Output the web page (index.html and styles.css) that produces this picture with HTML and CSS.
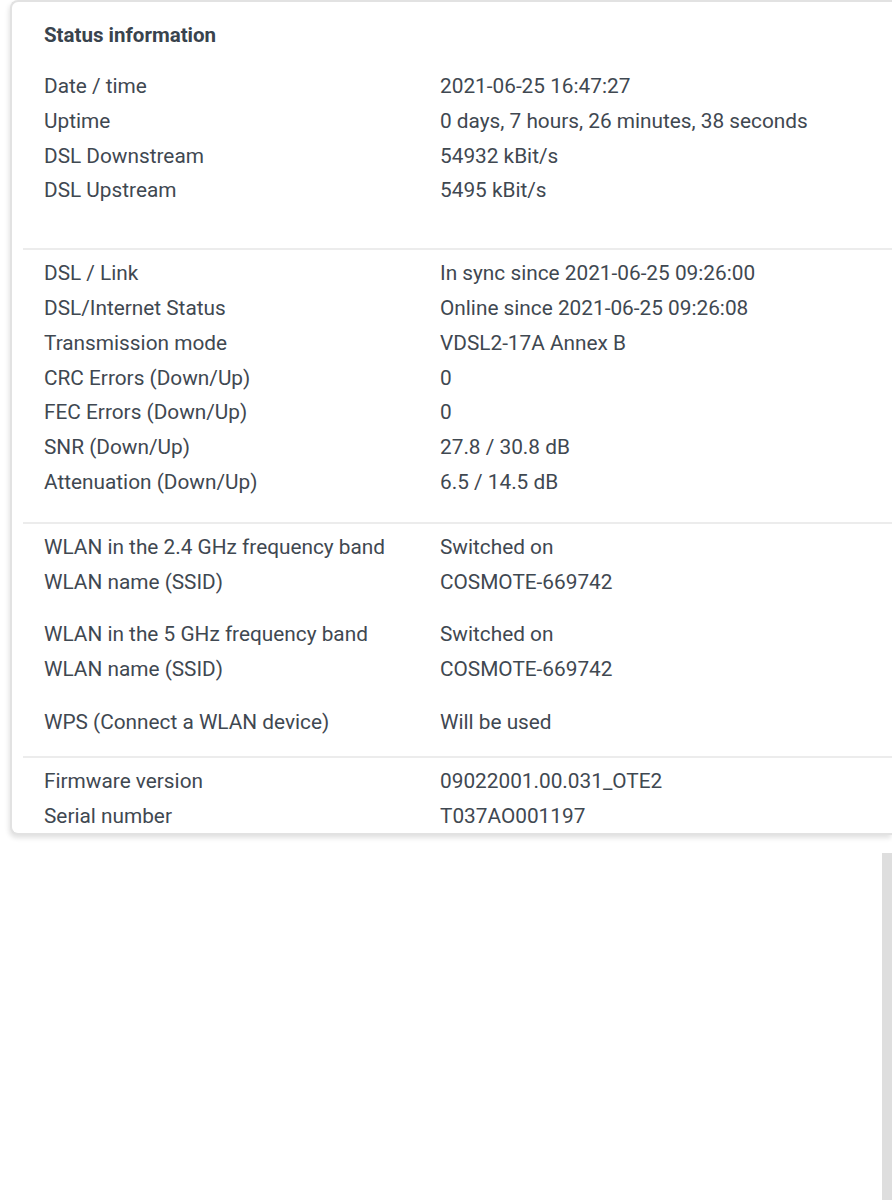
FILE: index.html
```html
<!DOCTYPE html>
<html>
  <head>
    <title>Status information</title>
    <link rel="stylesheet" href="styles.css">
  </head>
  <body>
    <div class="status-card">
      <div class="status-card-title">Status information</div>

      <div class="status-section first">
        <div class="status-row"><span>Date / time</span><span>2021-06-25 16:47:27</span></div>
        <div class="status-row"><span>Uptime</span><span>0 days, 7 hours, 26 minutes, 38 seconds</span></div>
        <div class="status-row"><span>DSL Downstream</span><span>54932 kBit/s</span></div>
        <div class="status-row"><span>DSL Upstream</span><span>5495 kBit/s</span></div>
      </div>

      <div class="status-section dsl">
        <div class="status-row"><span>DSL / Link</span><span>In sync since 2021-06-25 09:26:00</span></div>
        <div class="status-row"><span>DSL/Internet Status</span><span>Online since 2021-06-25 09:26:08</span></div>
        <div class="status-row"><span>Transmission mode</span><span>VDSL2-17A Annex B</span></div>
        <div class="status-row"><span>CRC Errors (Down/Up)</span><span>0</span></div>
        <div class="status-row"><span>FEC Errors (Down/Up)</span><span>0</span></div>
        <div class="status-row"><span>SNR (Down/Up)</span><span>27.8 / 30.8 dB</span></div>
        <div class="status-row"><span>Attenuation (Down/Up)</span><span>6.5 / 14.5 dB</span></div>
      </div>

      <div class="status-section wlan">
        <div class="status-group">
          <div class="status-row"><span>WLAN in the 2.4 GHz frequency band</span><span>Switched on</span></div>
          <div class="status-row"><span>WLAN name (SSID)</span><span>COSMOTE-669742</span></div>
        </div>
        <div class="status-group">
          <div class="status-row"><span>WLAN in the 5 GHz frequency band</span><span>Switched on</span></div>
          <div class="status-row"><span>WLAN name (SSID)</span><span>COSMOTE-669742</span></div>
        </div>
        <div class="status-group">
          <div class="status-row"><span>WPS (Connect a WLAN device)</span><span>Will be used</span></div>
        </div>
      </div>

      <div class="status-section last">
        <div class="status-row"><span>Firmware version</span><span>09022001.00.031_OTE2</span></div>
        <div class="status-row"><span>Serial number</span><span>T037AO001197</span></div>
      </div>
    </div>

    <div class="side-bar"></div>
  </body>
</html>
```

FILE: styles.css
```css
/* Status page */
html,
body {
  margin: 0;
  padding: 0;
  background: #ffffff;
  overflow: hidden;
}

body {
  width: 892px;
  height: 1200px;
  font-family: Roboto, "Noto Sans", sans-serif;
  color: #3f4851;
}

/* card runs on past the right edge, so no right border */
.status-card {
  margin-left: 10px;
  width: 882px;
  border: 2px solid #e2e2e2;
  border-right: none;
  border-radius: 8px 0 0 8px;
  box-shadow: -1px 3px 5px rgba(0, 0, 0, 0.12);
  background: #ffffff;
  box-sizing: border-box;
}

.status-card-title {
  padding: 16px 0 0 32px;
  line-height: 34px;
  font-size: 20.5px;
  font-weight: 700;
  color: #39434d;
}

.status-section {
  margin-left: 11px;
  padding-left: 21px;
  border-top: 2px solid #ececec;
}

.status-section.first {
  border-top: none;
  padding-top: 17px;
  padding-bottom: 40px;
}

.status-section.dsl {
  padding-top: 6px;
  padding-bottom: 22px;
}

.status-section.wlan {
  padding-top: 6px;
  padding-bottom: 16px;
  display: flex;
  flex-direction: column;
  gap: 18px;
}

.status-section.last {
  padding-top: 6px;
  padding-bottom: 0;
}

.status-row {
  display: grid;
  grid-template-columns: 396px 1fr;
  line-height: 34.8px;
  font-size: 20.8px;
  white-space: nowrap;
}

.side-bar {
  margin: 18px 0 0 882px;
  width: 10px;
  height: 360px;
  background: #dedede;
}
```
